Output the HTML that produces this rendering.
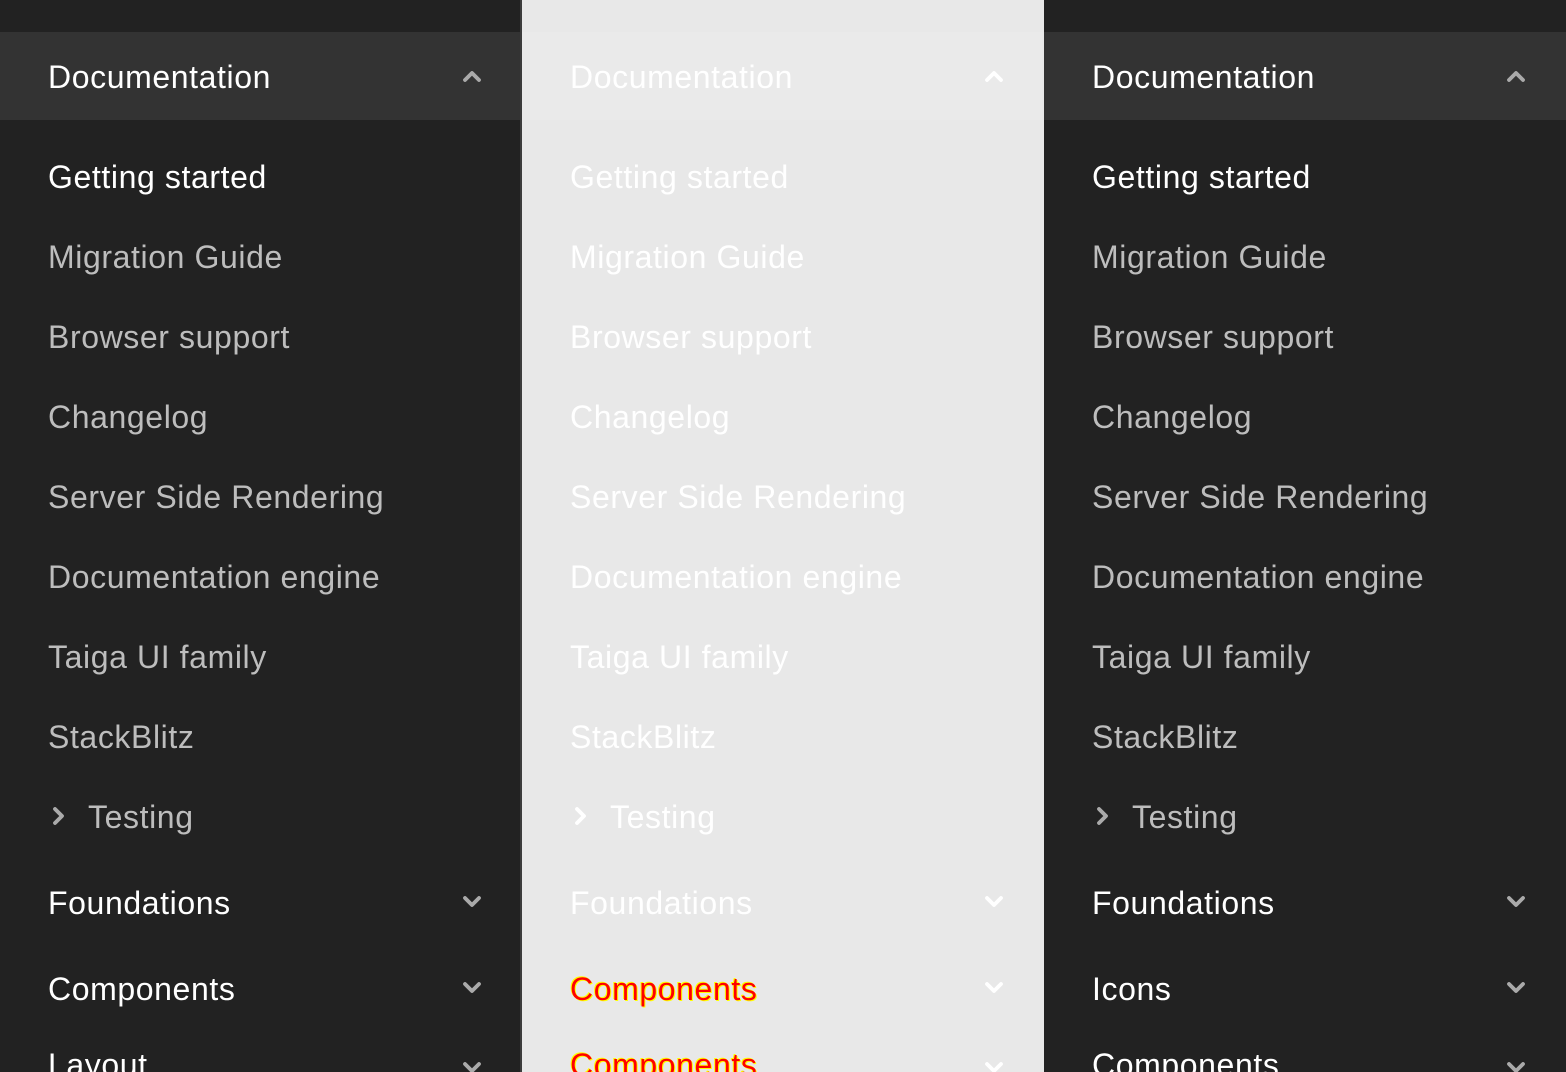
<!DOCTYPE html>
<html><head><style>
*{margin:0;padding:0;box-sizing:border-box}
body{width:1566px;height:1072px;overflow:hidden;background:#222;font-family:"Liberation Sans",sans-serif;position:relative}
.col{position:absolute;top:0;width:522px;height:1072px;background:#222;overflow:hidden}
.col.light{background:#e8e8e8}
.hdr{position:absolute;left:0;top:32px;width:520px;height:88px;background:#333}
.light .hdr{background:#eaeaea}
.t{position:absolute;left:48px;font-size:32px;line-height:40px;white-space:nowrap;color:#bdbdbd;letter-spacing:0.6px}
.w{color:#fff}
.light .t{color:#fff}
.ch{position:absolute;left:460px;width:24px;height:24px}
.ch path{fill:none;stroke:#aaa;stroke-width:3.8;stroke-linecap:round;stroke-linejoin:round}
.light .ch path{stroke:#fff}
.sep{position:absolute;left:520px;top:0;width:3px;height:1072px;background:#3c3c3c}
.glitch{color:#f00 !important;text-shadow:1px 1px 0 #ff0,-1px -1px 0 #ff0}
</style></head><body>
<div class="col" style="left:0">
 <div class="hdr"></div>
 <div class="t w" style="top:57px">Documentation</div>
 <svg class="ch" style="top:64px" viewBox="0 0 24 24"><path d="M5 16l7-7 7 7"/></svg>
 <div class="t w" style="top:157px">Getting started</div>
 <div class="t" style="top:237px">Migration Guide</div>
 <div class="t" style="top:317px">Browser support</div>
 <div class="t" style="top:397px">Changelog</div>
 <div class="t" style="top:477px">Server Side Rendering</div>
 <div class="t" style="top:557px">Documentation engine</div>
 <div class="t" style="top:637px">Taiga UI family</div>
 <div class="t" style="top:717px">StackBlitz</div>
 <svg class="ch" style="left:46px;top:804px" viewBox="0 0 24 24"><path d="M9 5l7 7-7 7"/></svg>
 <div class="t" style="top:797px;left:88px">Testing</div>
 <div class="t w" style="top:883px">Foundations</div>
 <svg class="ch" style="top:890px" viewBox="0 0 24 24"><path d="M5 8l7 7 7-7"/></svg>
 <div class="t w" style="top:969px">Components</div>
 <svg class="ch" style="top:976px" viewBox="0 0 24 24"><path d="M5 8l7 7 7-7"/></svg>
 <div class="t w" style="top:1045px">Layout</div>
 <svg class="ch" style="top:1056px" viewBox="0 0 24 24"><path d="M5 8l7 7 7-7"/></svg>
</div>
<div class="sep"></div>
<div class="col light" style="left:522px">
 <div class="hdr"></div>
 <div class="t" style="top:57px">Documentation</div>
 <svg class="ch" style="top:64px" viewBox="0 0 24 24"><path d="M5 16l7-7 7 7"/></svg>
 <div class="t" style="top:157px">Getting started</div>
 <div class="t" style="top:237px">Migration Guide</div>
 <div class="t" style="top:317px">Browser support</div>
 <div class="t" style="top:397px">Changelog</div>
 <div class="t" style="top:477px">Server Side Rendering</div>
 <div class="t" style="top:557px">Documentation engine</div>
 <div class="t" style="top:637px">Taiga UI family</div>
 <div class="t" style="top:717px">StackBlitz</div>
 <svg class="ch" style="left:46px;top:804px" viewBox="0 0 24 24"><path d="M9 5l7 7-7 7"/></svg>
 <div class="t" style="top:797px;left:88px">Testing</div>
 <div class="t" style="top:883px">Foundations</div>
 <svg class="ch" style="top:890px" viewBox="0 0 24 24"><path d="M5 8l7 7 7-7"/></svg>
 <div class="t glitch" style="top:969px">Components</div>
 <svg class="ch" style="top:976px" viewBox="0 0 24 24"><path d="M5 8l7 7 7-7"/></svg>
 <div class="t glitch" style="top:1045px">Components</div>
 <svg class="ch" style="top:1056px" viewBox="0 0 24 24"><path d="M5 8l7 7 7-7"/></svg>
</div>
<div class="col" style="left:1044px">
 <div class="hdr" style="width:522px"></div>
 <div class="t w" style="top:57px">Documentation</div>
 <svg class="ch" style="top:64px" viewBox="0 0 24 24"><path d="M5 16l7-7 7 7"/></svg>
 <div class="t w" style="top:157px">Getting started</div>
 <div class="t" style="top:237px">Migration Guide</div>
 <div class="t" style="top:317px">Browser support</div>
 <div class="t" style="top:397px">Changelog</div>
 <div class="t" style="top:477px">Server Side Rendering</div>
 <div class="t" style="top:557px">Documentation engine</div>
 <div class="t" style="top:637px">Taiga UI family</div>
 <div class="t" style="top:717px">StackBlitz</div>
 <svg class="ch" style="left:46px;top:804px" viewBox="0 0 24 24"><path d="M9 5l7 7-7 7"/></svg>
 <div class="t" style="top:797px;left:88px">Testing</div>
 <div class="t w" style="top:883px">Foundations</div>
 <svg class="ch" style="top:890px" viewBox="0 0 24 24"><path d="M5 8l7 7 7-7"/></svg>
 <div class="t w" style="top:969px">Icons</div>
 <svg class="ch" style="top:976px" viewBox="0 0 24 24"><path d="M5 8l7 7 7-7"/></svg>
 <div class="t w" style="top:1045px">Components</div>
 <svg class="ch" style="top:1056px" viewBox="0 0 24 24"><path d="M5 8l7 7 7-7"/></svg>
</div>
</body></html>
